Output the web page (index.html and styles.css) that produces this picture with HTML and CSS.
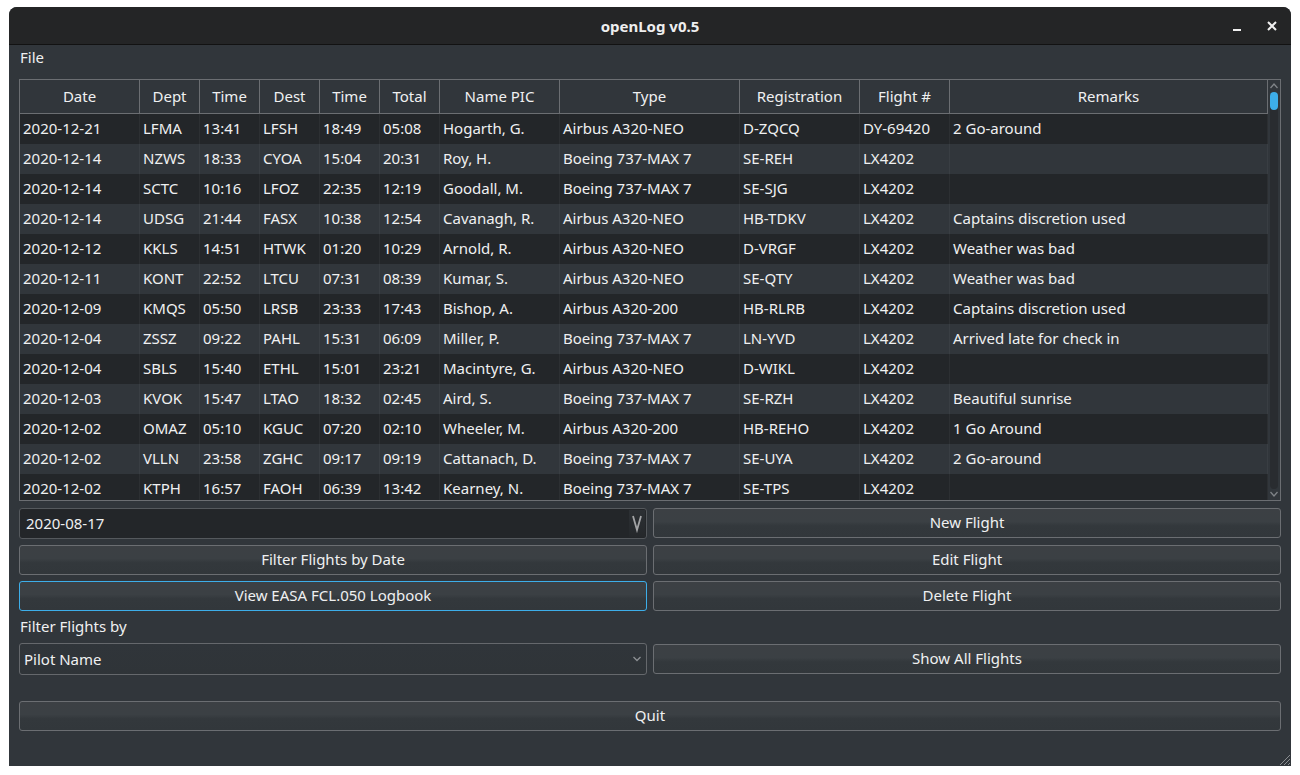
FILE: index.html
```html
<!DOCTYPE html>
<html>
<head>
<meta charset="utf-8">
<title>openLog v0.5</title>
<link rel="stylesheet" href="styles.css">
</head>
<body>
<div class="window">
  <div class="titlebar">
    <span class="title">openLog v0.5</span>
    <div class="wincontrols">
      <svg class="min" width="10" height="10" viewBox="0 0 10 10"><rect x="1" y="7" width="8" height="2" fill="#f0f0f0"/></svg>
      <svg class="close" width="12" height="12" viewBox="0 0 12 12"><path d="M2 2 L10 10 M10 2 L2 10" stroke="#f0f0f0" stroke-width="2"/></svg>
    </div>
  </div>
  <div class="menubar"><span class="menu-item">File</span></div>
  <div class="content">
    <div class="table-frame">
      <div class="table-main">
        <div class="row head">
          <div>Date</div><div>Dept</div><div>Time</div><div>Dest</div><div>Time</div><div>Total</div><div>Name PIC</div><div>Type</div><div>Registration</div><div>Flight #</div><div>Remarks</div>
        </div>
        <div class="row odd"><div>2020-12-21</div><div>LFMA</div><div>13:41</div><div>LFSH</div><div>18:49</div><div>05:08</div><div>Hogarth, G.</div><div>Airbus A320-NEO</div><div>D-ZQCQ</div><div>DY-69420</div><div>2 Go-around</div></div>
        <div class="row even"><div>2020-12-14</div><div>NZWS</div><div>18:33</div><div>CYOA</div><div>15:04</div><div>20:31</div><div>Roy, H.</div><div>Boeing 737-MAX 7</div><div>SE-REH</div><div>LX4202</div><div></div></div>
        <div class="row odd"><div>2020-12-14</div><div>SCTC</div><div>10:16</div><div>LFOZ</div><div>22:35</div><div>12:19</div><div>Goodall, M.</div><div>Boeing 737-MAX 7</div><div>SE-SJG</div><div>LX4202</div><div></div></div>
        <div class="row even"><div>2020-12-14</div><div>UDSG</div><div>21:44</div><div>FASX</div><div>10:38</div><div>12:54</div><div>Cavanagh, R.</div><div>Airbus A320-NEO</div><div>HB-TDKV</div><div>LX4202</div><div>Captains discretion used</div></div>
        <div class="row odd"><div>2020-12-12</div><div>KKLS</div><div>14:51</div><div>HTWK</div><div>01:20</div><div>10:29</div><div>Arnold, R.</div><div>Airbus A320-NEO</div><div>D-VRGF</div><div>LX4202</div><div>Weather was bad</div></div>
        <div class="row even"><div>2020-12-11</div><div>KONT</div><div>22:52</div><div>LTCU</div><div>07:31</div><div>08:39</div><div>Kumar, S.</div><div>Airbus A320-NEO</div><div>SE-QTY</div><div>LX4202</div><div>Weather was bad</div></div>
        <div class="row odd"><div>2020-12-09</div><div>KMQS</div><div>05:50</div><div>LRSB</div><div>23:33</div><div>17:43</div><div>Bishop, A.</div><div>Airbus A320-200</div><div>HB-RLRB</div><div>LX4202</div><div>Captains discretion used</div></div>
        <div class="row even"><div>2020-12-04</div><div>ZSSZ</div><div>09:22</div><div>PAHL</div><div>15:31</div><div>06:09</div><div>Miller, P.</div><div>Boeing 737-MAX 7</div><div>LN-YVD</div><div>LX4202</div><div>Arrived late for check in</div></div>
        <div class="row odd"><div>2020-12-04</div><div>SBLS</div><div>15:40</div><div>ETHL</div><div>15:01</div><div>23:21</div><div>Macintyre, G.</div><div>Airbus A320-NEO</div><div>D-WIKL</div><div>LX4202</div><div></div></div>
        <div class="row even"><div>2020-12-03</div><div>KVOK</div><div>15:47</div><div>LTAO</div><div>18:32</div><div>02:45</div><div>Aird, S.</div><div>Boeing 737-MAX 7</div><div>SE-RZH</div><div>LX4202</div><div>Beautiful sunrise</div></div>
        <div class="row odd"><div>2020-12-02</div><div>OMAZ</div><div>05:10</div><div>KGUC</div><div>07:20</div><div>02:10</div><div>Wheeler, M.</div><div>Airbus A320-200</div><div>HB-REHO</div><div>LX4202</div><div>1 Go Around</div></div>
        <div class="row even"><div>2020-12-02</div><div>VLLN</div><div>23:58</div><div>ZGHC</div><div>09:17</div><div>09:19</div><div>Cattanach, D.</div><div>Boeing 737-MAX 7</div><div>SE-UYA</div><div>LX4202</div><div>2 Go-around</div></div>
        <div class="row odd"><div>2020-12-02</div><div>KTPH</div><div>16:57</div><div>FAOH</div><div>06:39</div><div>13:42</div><div>Kearney, N.</div><div>Boeing 737-MAX 7</div><div>SE-TPS</div><div>LX4202</div><div></div></div>
      </div>
      <div class="vscroll">
        <svg class="sarrow" width="12" height="12" viewBox="0 0 12 12"><path d="M2.5 8 L6 4 L9.5 8" fill="none" stroke="#7f8387" stroke-width="1.3"/></svg>
        <div class="track"><div class="handle"></div></div>
        <svg class="sarrow" width="12" height="12" viewBox="0 0 12 12"><path d="M2.5 4 L6 8 L9.5 4" fill="none" stroke="#7f8387" stroke-width="1.3"/></svg>
      </div>
    </div>

    <div class="actions">
      <div class="dateedit">
        <span class="dateval">2020-08-17</span>
        <span class="dropbtn"><svg width="12" height="20" viewBox="0 0 12 20"><path d="M2 3 L6 17 L10 3" fill="none" stroke="#a3a4a6" stroke-width="1.8"/></svg></span>
      </div>
      <button class="btn">New Flight</button>
      <button class="btn">Filter Flights by Date</button>
      <button class="btn">Edit Flight</button>
      <button class="btn focus">View EASA FCL.050 Logbook</button>
      <button class="btn">Delete Flight</button>
    </div>

    <div class="label">Filter Flights by</div>

    <div class="filter-row">
      <div class="combo">
        <span>Pilot Name</span>
        <svg width="10" height="8" viewBox="0 0 10 8"><path d="M1.5 2 L5 5.5 L8.5 2" fill="none" stroke="#8d9094" stroke-width="1.3"/></svg>
      </div>
      <button class="btn">Show All Flights</button>
    </div>

    <button class="btn quit">Quit</button>
  </div>
  <svg class="grip" width="12" height="12" viewBox="0 0 12 12"><path d="M1 11 L11 1 M5 11 L11 5 M9 11 L11 9" stroke="#8a8d90" stroke-width="1"/></svg>
</div>
</body>
</html>
```
FILE: styles.css
```css
html, body {
  margin: 0;
  padding: 0;
  background: #ffffff;
}

body {
  font-family: "Noto Sans", "DejaVu Sans", sans-serif;
}

.window {
  margin: 7px 0 0 9px;
  width: 1282px;
  height: 759px;
  background: #31363b;
  border-radius: 8px 8px 0 0;
  overflow: hidden;
  position: relative;
  display: flex;
  flex-direction: column;
  color: #eff0f1;
  font-size: 15px;
}

.titlebar {
  height: 37px;
  flex: none;
  background: #242526;
  border-bottom: 1px solid #121212;
  display: flex;
  align-items: center;
  justify-content: center;
  position: relative;
}

.title {
  font-weight: bold;
  font-size: 15px;
  color: #eeeeee;
}

.wincontrols {
  position: absolute;
  right: 0;
  top: 0;
  height: 37px;
  display: flex;
  align-items: center;
}

.wincontrols .min {
  margin-right: 24px;
  margin-top: 2px;
}

.wincontrols .close {
  margin-right: 13px;
}

.menubar {
  height: 34px;
  flex: none;
  box-sizing: border-box;
  padding: 1px 0 0 11px;
  line-height: 22px;
}

.content {
  padding: 0 10px;
  display: flex;
  flex-direction: column;
}

.table-frame {
  height: 422px;
  box-sizing: border-box;
  border: 1px solid #6b6e72;
  display: flex;
  overflow: hidden;
}

.table-main {
  flex: 1;
  overflow: hidden;
}

.row {
  display: grid;
  grid-template-columns: 120px 60px 60px 60px 60px 60px 120px 180px 120px 90px 1fr;
  height: 30px;
}

.row > div {
  box-sizing: border-box;
  border-right: 1px solid rgba(255, 255, 255, 0.045);
  padding-left: 3px;
  line-height: 28px;
  white-space: nowrap;
  overflow: hidden;
}

.row.odd {
  background: #232629;
}

.row.even {
  background: #31363b;
}

.row.head {
  height: 34px;
  background: #31363b;
}

.row.head > div {
  border-right: 1px solid #6b6e72;
  border-bottom: 1px solid #6b6e72;
  text-align: center;
  line-height: 33px;
  padding: 0;
}

.vscroll {
  width: 12px;
  flex: none;
  display: flex;
  flex-direction: column;
  align-items: center;
  background: #31363b;
}

.sarrow {
  flex: none;
}

.track {
  flex: 1;
  width: 8px;
  background: #292c30;
  border-radius: 4px;
  margin: 0 0 -1px;
}

.handle {
  height: 18px;
  background: #3daee9;
  border-radius: 4px;
}

.actions {
  margin-top: 7px;
  display: grid;
  grid-template-columns: 1fr 1fr;
  grid-template-rows: 31px 30px 30px;
  column-gap: 6px;
  row-gap: 6px;
}

.dateedit {
  box-sizing: border-box;
  background: #232629;
  border: 1px solid #55595d;
  border-radius: 3px;
  display: flex;
  align-items: center;
  justify-content: space-between;
  padding-left: 6px;
  padding-bottom: 1px;
}

.dropbtn {
  width: 16px;
  height: 27px;
  margin-right: 1px;
  display: flex;
  align-items: center;
  justify-content: center;
  background: linear-gradient(#2c3034, #25282b);
}

.btn {
  box-sizing: border-box;
  height: 30px;
  margin: 0;
  padding: 0 0 2px;
  border: 1px solid #6b6e72;
  border-radius: 3px;
  background: linear-gradient(#3c4044 0%, #3b4044 45%, #33383c 60%, #32373b 100%);
  color: #eff0f1;
  font-family: inherit;
  font-size: 15px;
  text-align: center;
}

.btn.focus {
  border-color: #3daee9;
}

.label {
  height: 32px;
  box-sizing: border-box;
  padding: 5px 0 0 1px;
  line-height: 20px;
}

.filter-row {
  display: grid;
  grid-template-columns: 1fr 1fr;
  column-gap: 6px;
  height: 32px;
  align-items: center;
}

.combo {
  box-sizing: border-box;
  height: 32px;
  border: 1px solid #65686c;
  border-radius: 3px;
  background: linear-gradient(#30353a, #2f3438);
  display: flex;
  align-items: center;
  justify-content: space-between;
  padding: 0 4px 1px 4px;
}

.quit {
  margin-top: 26px;
}

.grip {
  position: absolute;
  right: 0;
  bottom: 0;
}
```
